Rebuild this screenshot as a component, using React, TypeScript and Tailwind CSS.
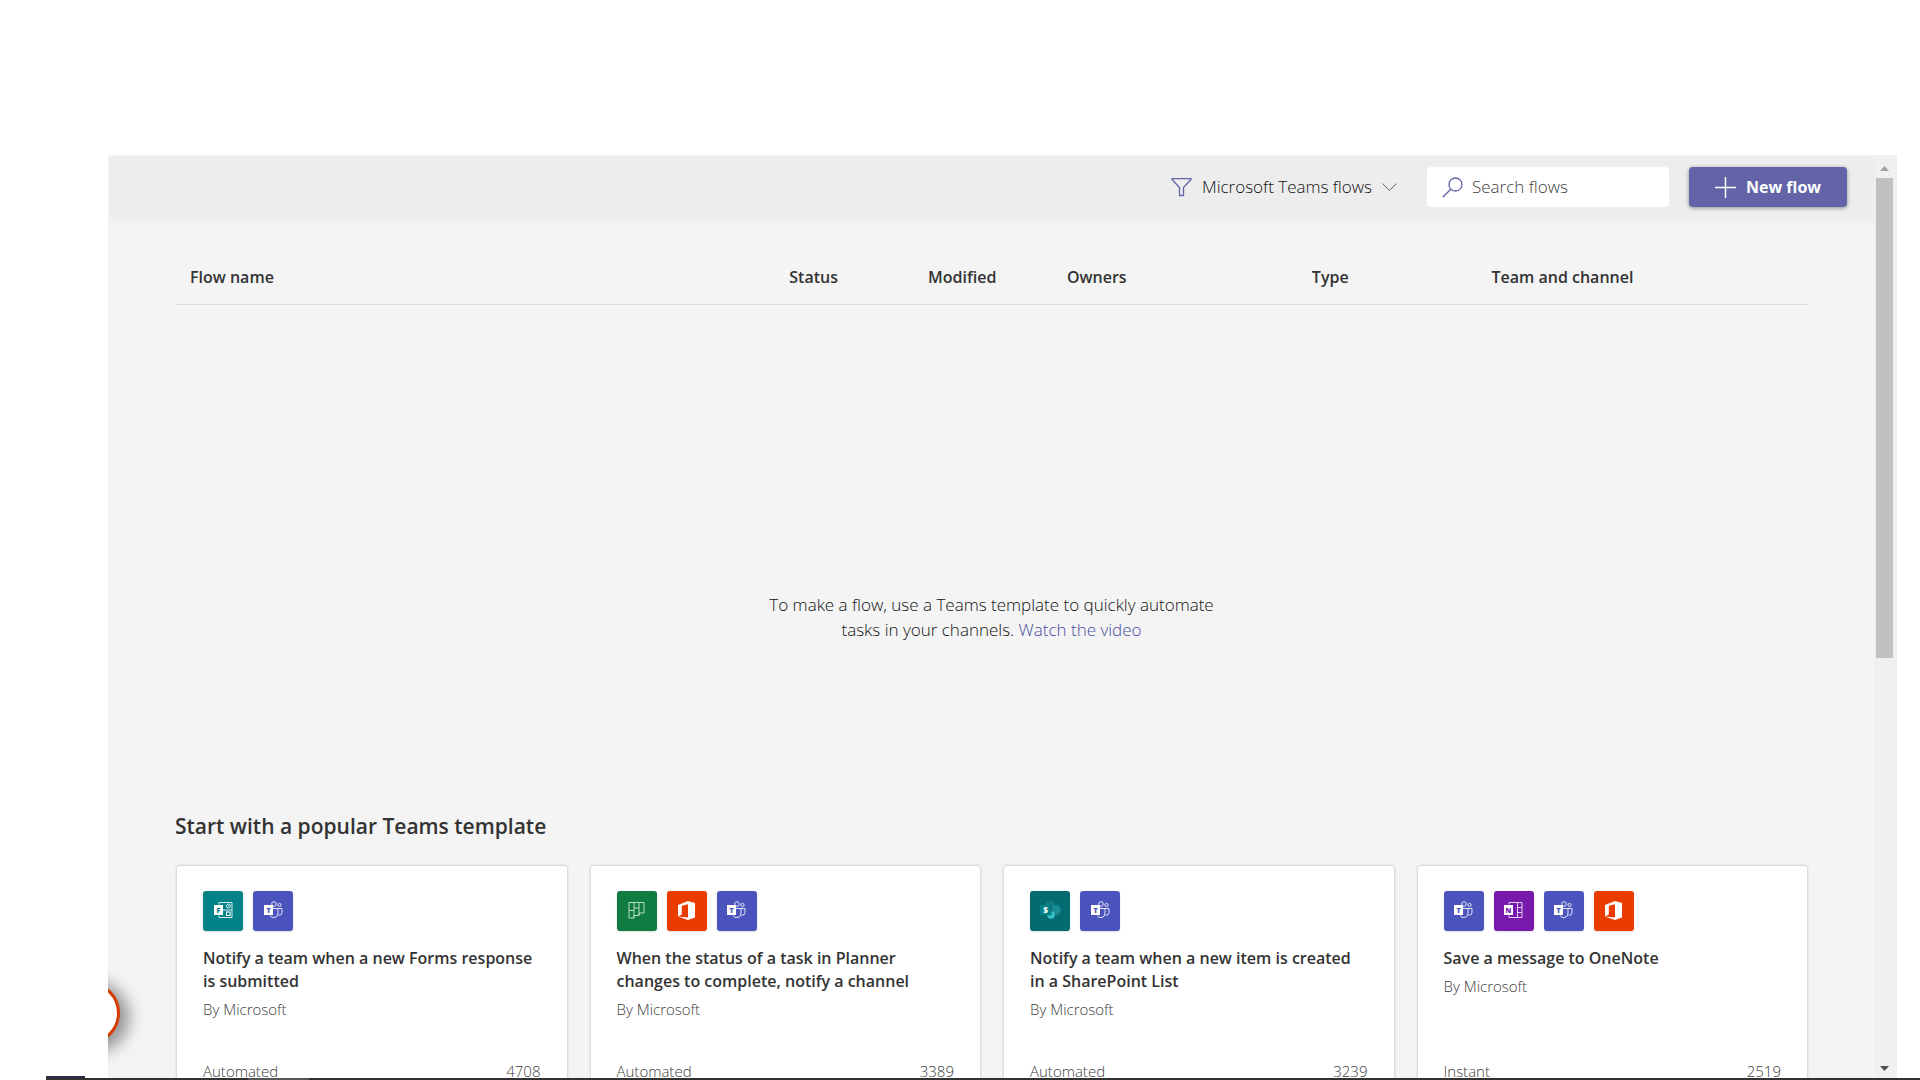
import React from "react";

type AppName = "forms" | "teams" | "planner" | "office" | "sharepoint" | "onenote";

function LetterBadge({ letter, fill }: { letter: string; fill: string }) {
  return (
    <>
      <rect x="0" y="4" width="9" height="10" fill="#fff" />
      <text x="4.5" y="11.5" textAnchor="middle" fontSize="7" fontWeight="800" fill={fill}>
        {letter}
      </text>
    </>
  );
}

const glyphs: Record<AppName, React.ReactNode> = {
  forms: (
    <>
      <path d="M5 3.500V1.500H18V16.500H5V14.500M9 9H18" fill="none" stroke="#cfe9ea" />
      <circle cx="14.500" cy="5" r="2" fill="none" stroke="#cfe9ea" />
      <circle cx="14.500" cy="5" r="0.700" fill="#cfe9ea" />
      <rect x="12.500" y="11" width="3.500" height="3.500" fill="none" stroke="#fff" />
      <LetterBadge letter="F" fill="#038387" />
    </>
  ),
  teams: (
    <>
      <circle cx="10" cy="3" r="2.300" fill="none" stroke="#e3e5f7" />
      <circle cx="15.500" cy="4" r="1.600" fill="none" stroke="#e3e5f7" />
      <path d="M9 7.500H18V11.500A3 3 0 0 1 14.500 14.200M14 7.500V12A4.300 4.300 0 0 1 6 14.500" fill="none" stroke="#e3e5f7" />
      <LetterBadge letter="T" fill="#4b53bc" />
    </>
  ),
  planner: (
    <path
      d="M2 1.500H17V12H12V14.500H7V17H2ZM7 1.500V17M12 1.500V14.500M2 9.500H7M7 7H12"
      fill="none"
      stroke="#b8dcc6"
    />
  ),
  office: (
    <path d="M1 4 11 0 18 2V16.500L11 19 1 15.500 11 16.500V3.300L4.800 4.800V13.500L1 15.500Z" fill="#fff" />
  ),
  sharepoint: (
    <>
      <circle cx="9" cy="5" r="5.500" fill="#045c60" />
      <circle cx="9" cy="4.500" r="5" fill="#107d82" />
      <circle cx="15" cy="9" r="4.800" fill="#1a8e94" />
      <circle cx="10" cy="14" r="3.800" fill="#37c6d0" />
      <rect x="0" y="4" width="11" height="10.500" fill="#04565a" opacity="0.500" />
      <rect x="-1" y="4" width="10.500" height="10" fill="#038387" />
      <text x="4.500" y="12" textAnchor="middle" fontSize="8" fontWeight="800" fill="#fff">
        S
      </text>
    </>
  ),
  onenote: (
    <>
      <path d="M5 3.500V1.500H18V16.500H5V14.500M13.500 1.500V16.500M13.500 6.500H18M13.500 11.500H18" fill="none" stroke="#e4cdf0" />
      <LetterBadge letter="N" fill="#7719aa" />
    </>
  ),
};

const tileColors: Record<AppName, string> = {
  forms: "bg-[#038387]",
  teams: "bg-[#4b53bc]",
  planner: "bg-[#117c41]",
  office: "bg-[#eb3c00]",
  sharepoint: "bg-[#036c70]",
  onenote: "bg-[#7719aa]",
};

function AppTile({ name }: { name: AppName }) {
  return (
    <span className={`flex size-10 items-center justify-center rounded-[3px] shadow-sm ${tileColors[name]}`}>
      <svg className="h-[19px] w-[19px] overflow-visible" viewBox="0 0 19 19" aria-label={name}>
        {glyphs[name]}
      </svg>
    </span>
  );
}

type Template = { apps: AppName[]; title: string; kind: string; uses: number };

const templates: Template[] = [
  { apps: ["forms", "teams"], title: "Notify a team when a new Forms response is submitted", kind: "Automated", uses: 4708 },
  {
    apps: ["planner", "office", "teams"],
    title: "When the status of a task in Planner changes to complete, notify a channel",
    kind: "Automated",
    uses: 3389,
  },
  {
    apps: ["sharepoint", "teams"],
    title: "Notify a team when a new item is created in a SharePoint List",
    kind: "Automated",
    uses: 3239,
  },
  { apps: ["teams", "onenote", "teams", "office"], title: "Save a message to OneNote", kind: "Instant", uses: 2519 },
];

function TemplateCard({ apps, title, kind, uses }: Template) {
  return (
    <article className="flex h-64 flex-col rounded-[3px] bg-white px-[26px] pt-[25px] pb-6 shadow-[0_0_3px_rgba(0,0,0,0.28)]">
      <div className="flex gap-[10px]">
        {apps.map((app, i) => (
          <AppTile key={i} name={app} />
        ))}
      </div>
      <div className="mt-4 h-[108px]">
        <h3 className="text-base leading-[23px] font-semibold text-[#333]">{title}</h3>
        <p className="mt-[6px] text-[15px] leading-5 font-light text-[#404040]">By Microsoft</p>
      </div>
      <div className="mt-[6px] flex justify-between text-[15px] leading-5 font-light text-[#404040]">
        <span>{kind}</span>
        <span>{uses}</span>
      </div>
    </article>
  );
}

function Toolbar() {
  return (
    <header className="flex h-[60px] shrink-0 items-center justify-end bg-[#ededed] pr-[27px] shadow-[0_1px_8px_rgba(0,0,0,0.07)]">
      <button type="button" className="mr-[30px] flex items-center text-[#333]">
        <svg className="mr-[10px] h-5 w-[21px]" viewBox="0 0 21 20" fill="none" stroke="#6264a7" strokeWidth="1.300">
          <path d="M1 1.700H20V2.500L12.500 10.500V18.500H8.500V10.500L1 2.500Z" />
        </svg>
        <span className="text-[17px] leading-6 font-light text-[#111]">Microsoft Teams flows</span>
        <svg className="ml-[10px] h-2 w-[15px]" viewBox="0 0 15 8" fill="none" stroke="#666">
          <path d="M0.500 0.500 7.500 7.500 14.500 0.500" />
        </svg>
      </button>
      <label className="mr-5 flex h-10 w-[242px] items-center rounded-[4px] bg-white pl-[15px]">
        <svg className="mr-[9px] size-[21px] shrink-0" viewBox="0 0 21 21" fill="none" stroke="#6264a7" strokeWidth="1.300">
          <circle cx="13.500" cy="7.500" r="6.500" />
          <path d="M8.700 12.200 0.700 20.200" />
        </svg>
        <input
          type="text"
          aria-label="Search flows"
          placeholder="Search flows"
          className="w-full min-w-0 bg-transparent text-[17px] leading-6 font-light outline-none placeholder:text-[#404040]"
        />
      </label>
      <button
        type="button"
        className="flex h-10 w-[158px] items-center justify-center rounded-[4px] bg-[#6264a7] text-base leading-6 font-bold text-white shadow-[0_1px_4px_rgba(0,0,0,0.4)]"
      >
        <svg className="mr-[10px] size-[21px]" viewBox="0 0 21 21" fill="none" stroke="#fff" strokeWidth="1.500">
          <path d="M10.500 0V21M0 10.500H21" />
        </svg>
        New flow
      </button>
    </header>
  );
}

const columns = [
  { label: "Flow name", width: "w-[36.7%]" },
  { label: "Status", width: "w-[8.5%]" },
  { label: "Modified", width: "w-[8.5%]" },
  { label: "Owners", width: "w-[15%]" },
  { label: "Type", width: "w-[11%]" },
  { label: "Team and channel", width: "w-[20.3%]" },
];

function Scrollbar() {
  return (
    <div className="flex w-[23px] shrink-0 flex-col items-center bg-[#f0f0f0] pt-[9px] pr-[2px] pb-[7px]">
      <svg className="h-[5px] w-[9px]" viewBox="0 0 9 5">
        <path d="M0 5 4.500 0 9 5Z" fill="#a0a0a0" />
      </svg>
      <div className="mt-[7px] flex w-[17px] grow">
        <div className="h-[54%] w-full bg-[#c1c1c1]" />
      </div>
      <svg className="h-[5px] w-[9px]" viewBox="0 0 9 5">
        <path d="M0 0 4.500 5 9 0Z" fill="#505050" />
      </svg>
    </div>
  );
}

export default function App() {
  return (
    <div className="flex h-screen flex-col overflow-hidden bg-white pt-[155px] font-['Open_Sans','Noto_Sans',sans-serif]">
      <div className="relative mr-[23px] ml-[108px] flex min-h-0 grow overflow-hidden bg-[#f1f1f1] pt-[2px] pl-[2px]">
        <main className="flex min-w-0 grow flex-col overflow-hidden bg-[#f4f4f4]">
          <Toolbar />
          <div className="pr-[66px] pl-[65px]">
            <table className="mt-[33px] w-full table-fixed border-b border-[#dedede] text-left">
              <thead>
                <tr>
                  {columns.map((c) => (
                    <th key={c.label} scope="col" className={`h-[54px] pl-[15px] text-base font-semibold text-[#333] ${c.width}`}>
                      {c.label}
                    </th>
                  ))}
                </tr>
              </thead>
            </table>
            <p className="mx-auto mt-[287px] w-[470px] text-center text-[17px] leading-[25px] font-light text-[#111]">
              To make a flow, use a Teams template to quickly automate tasks in your channels.{" "}
              <a href="#video" className="text-[#4a4da0]">
                Watch the video
              </a>
            </p>
            <h2 className="mt-[168px] text-[21px] leading-8 font-semibold text-[#333]">Start with a popular Teams template</h2>
            <div className="mt-6 mr-px ml-[2px] grid grid-cols-4 gap-6">
              {templates.map((t) => (
                <TemplateCard key={t.title} {...t} />
              ))}
            </div>
          </div>
        </main>
        <Scrollbar />
        <div className="absolute bottom-[34px] -left-[50px] size-[62px] rounded-full border-[3px] border-[#d83b01] bg-white shadow-[5px_4px_16px_4px_rgba(0,0,0,0.4)]" />
      </div>
      <footer className="relative ml-[46px] flex h-[2px] shrink-0 bg-[#323232]">
        <div className="absolute -top-[2px] left-0 h-[2px] w-[39px] bg-[#2b2b48]" />
        <div className="ml-[202px] w-[61px] bg-[#555]" />
      </footer>
    </div>
  );
}
